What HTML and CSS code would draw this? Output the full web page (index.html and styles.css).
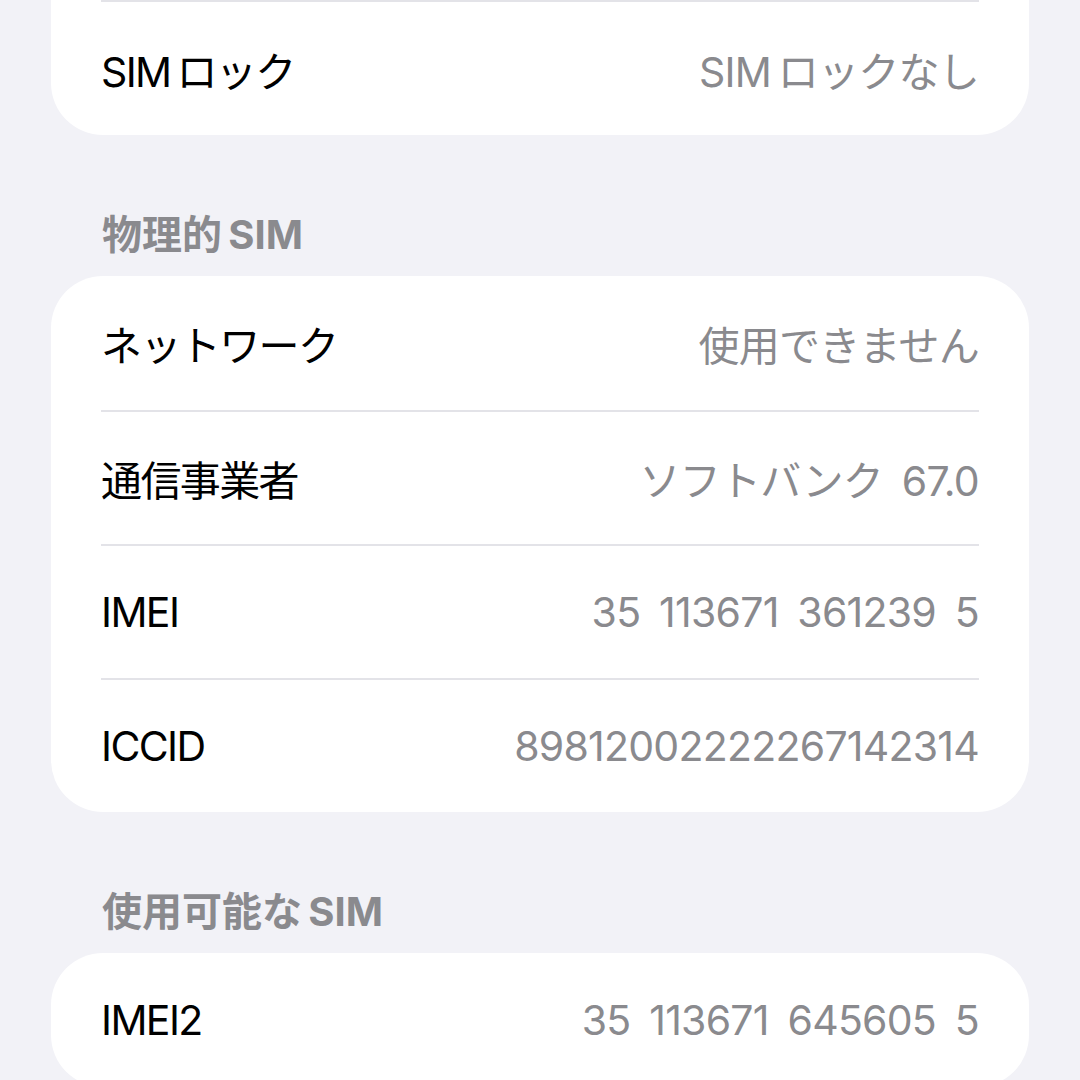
FILE: index.html
```html
<!DOCTYPE html>
<html lang="ja">
<head>
    <meta charset="UTF-8">
    <meta name="viewport" content="width=device-width, initial-scale=1.0">
    <title>SIM情報</title>
    <link rel="stylesheet" href="styles.css">
</head>
<body>
    <div class="page">
        <!-- 上のグループ(上端は画面外) -->
        <div class="card card-cut">
            <div class="row row-first-line">
                <span class="label">SIM&#8201;ロック</span>
                <span class="value">SIM&#8201;ロックなし</span>
            </div>
        </div>

        <div class="section-header">物理的&#8201;SIM</div>
        <div class="card">
            <div class="row">
                <span class="label">ネットワーク</span>
                <span class="value">使用できません</span>
            </div>
            <div class="row">
                <span class="label">通信事業者</span>
                <span class="value">ソフトバンク 67.0</span>
            </div>
            <div class="row">
                <span class="label">IMEI</span>
                <span class="value">35 113671 361239 5</span>
            </div>
            <div class="row">
                <span class="label">ICCID</span>
                <span class="value">89812002222267142314</span>
            </div>
        </div>

        <div class="section-header">使用可能な&#8201;SIM</div>
        <div class="card">
            <div class="row">
                <span class="label">IMEI2</span>
                <span class="value">35 113671 645605 5</span>
            </div>
        </div>
    </div>
</body>
</html>
```

FILE: styles.css
```css
body {
    margin: 0;
    background-color: #f2f2f7;
    font-family: "Inter", "Noto Sans CJK JP", sans-serif;
    color: #000;
    overflow: hidden;
}
.page {
    padding: 0 51px;
}
.card {
    background: #fff;
    border-radius: 52px;
    padding: 0 50px;
}
.card-cut {
    border-top-left-radius: 0;
    border-top-right-radius: 0;
}
.row {
    height: 134px;
    box-sizing: border-box;
    display: flex;
    align-items: center;
    justify-content: space-between;
    font-size: 41px;
}
.row + .row,
.row-first-line {
    border-top: 2px solid #e3e3e8;
}
.row-first-line {
    height: 135px;
}
.label {
    color: #000;
    letter-spacing: -1.6px;
}
.value {
    color: #8a8a8e;
    letter-spacing: -0.75px;
    word-spacing: 8px;
}
.section-header {
    padding: 76px 0 17px 51px;
    line-height: 48px;
    font-size: 40px;
    font-weight: 700;
    color: #8a8a8e;
}
```
